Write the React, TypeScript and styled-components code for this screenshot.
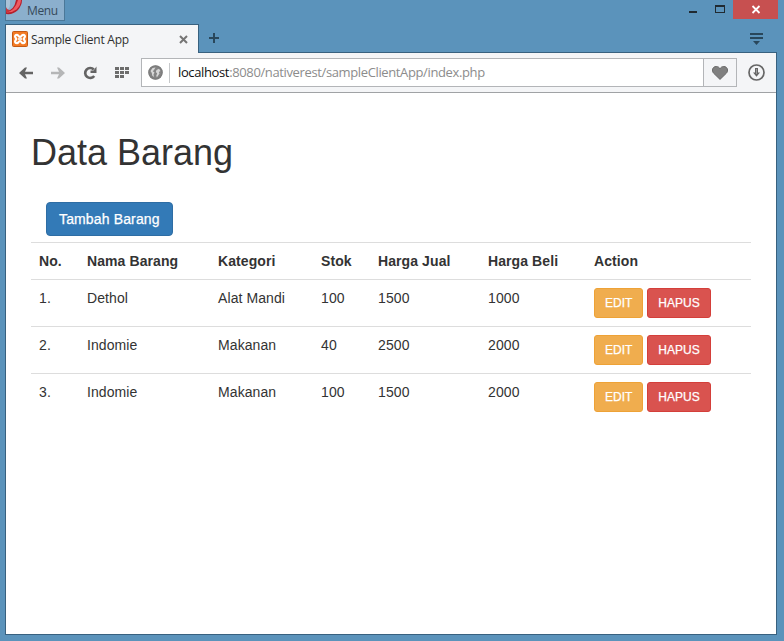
import React from "react";
import styled, { createGlobalStyle } from "styled-components";

const chrome = "#5b93bb";
const edge = "#38617f";
const panel = "#f4f5f7";

const GlobalStyle = createGlobalStyle`
  * { box-sizing: border-box; }
  html, body { margin: 0; padding: 0; background: ${chrome}; }
  body { overflow: hidden; }
  svg { display: block; flex: none; }
`;

const Window = styled.div`
  width: 784px;
  height: 641px;
  display: flex;
  flex-direction: column;
  padding: 0 7px 6px 5px;
  background: ${chrome};
  font-family: "Open Sans", "Noto Sans", sans-serif;
`;

const TitleBar = styled.header`
  height: 24px;
  flex: none;
  display: flex;
  align-items: flex-start;
  margin-right: -1px;
`;

const MenuButton = styled.button`
  width: 60px;
  height: 21px;
  padding: 0;
  display: flex;
  align-items: flex-start;
  border: 1px solid #4b7898;
  border-top: 0;
  background: #8bafcd;
  color: #35495a;
  font: 12px/20px "Open Sans", sans-serif;
  letter-spacing: -0.4px;
`;

const MenuLabel = styled.span`
  margin-left: 5px;
  padding-top: 1px;
`;

const WindowControls = styled.div`
  margin-left: auto;
  display: flex;
`;

const CloseButton = styled.div`
  width: 45px;
  height: 19px;
  background: #c75050;
`;

const TabRow = styled.nav`
  height: 29px;
  flex: none;
  display: flex;
`;

const Tab = styled.div`
  width: 194px;
  display: flex;
  align-items: center;
  border: 1px solid ${edge};
  border-bottom: 0;
  background: ${panel};
  padding: 0 10px 0 6px;
`;

const TabTitle = styled.span`
  margin-left: 3px;
  margin-right: auto;
  padding-top: 1px;
  color: #303030;
  font-size: 12px;
  line-height: 18px;
  letter-spacing: -0.24px;
  white-space: nowrap;
`;

const TabSpace = styled.div`
  flex: 1;
  display: flex;
  justify-content: space-between;
  border-bottom: 1px solid ${edge};
  padding: 9px 14px 0 10px;
`;

const Body = styled.div`
  flex: 1;
  display: flex;
  flex-direction: column;
  border: 1px solid ${edge};
  border-top: 0;
  background: #fff;
`;

const Toolbar = styled.div`
  height: 40px;
  flex: none;
  display: flex;
  align-items: center;
  background: ${panel};
  border-bottom: 1px solid #a0a2a5;
  padding: 0 11px 0 13px;
`;

const NavIcons = styled.div`
  width: 122px;
  display: flex;
  align-items: center;
  gap: 18px;
`;

const AddressBar = styled.div`
  width: 596px;
  height: 29px;
  margin-right: 11px;
  display: flex;
  align-items: center;
  border: 1px solid #b3b5b8;
  background: #fff;
  padding-left: 6px;
`;

const Separator = styled.div`
  width: 1px;
  height: 20px;
  margin: 0 8px 0 6px;
  background: #c6c8ca;
`;

const Url = styled.span`
  padding-bottom: 1px;
  color: #8c8c8c;
  font-size: 13px;
  line-height: 20px;
  letter-spacing: -0.37px;
  white-space: nowrap;
`;

const Host = styled.span`
  color: #111;
`;

const HeartBox = styled.div`
  width: 33px;
  height: 27px;
  margin-left: auto;
  display: flex;
  align-items: center;
  justify-content: center;
  border-left: 1px solid #b3b5b8;
  background: ${panel};
`;

const Page = styled.main`
  padding: 40px 25px 0;
  color: #333;
  font: 14px/20px "Liberation Sans", Arial, sans-serif;
`;

const Heading = styled.h1`
  margin: 0 0 29px;
  font-size: 36px;
  font-weight: 400;
  line-height: 40px;
`;

const Button = styled.button<{ $fill: string; $border: string; $small?: boolean }>`
  height: ${(p) => (p.$small ? 30 : 34)}px;
  padding: 0 ${(p) => (p.$small ? 10 : 12)}px;
  border: 1px solid ${(p) => p.$border};
  border-radius: ${(p) => (p.$small ? 3 : 4)}px;
  background: ${(p) => p.$fill};
  color: #fff;
  font-family: inherit;
  font-size: ${(p) => (p.$small ? 12 : 14)}px;
  letter-spacing: ${(p) => (p.$small ? 0 : 0.14)}px;
  line-height: 20px;
  white-space: nowrap;
  -webkit-text-stroke: 0.25px #fff;
`;

const AddRow = styled.div`
  display: flex;
  padding-left: 15px;
  margin-bottom: 6px;
`;

const Table = styled.table`
  width: 720px;
  table-layout: fixed;
  border-collapse: separate;
  border-spacing: 0;
  letter-spacing: 0.09px;
`;

const Column = styled.col<{ $width: number }>`
  width: ${(p) => p.$width}px;
`;

const HeadCell = styled.th`
  padding: 8px;
  border-top: 1px solid #ddd;
  text-align: left;
  white-space: nowrap;
`;

const Cell = styled.td`
  padding: 8px;
  border-top: 1px solid #ddd;
  vertical-align: top;
  white-space: nowrap;
`;

const Actions = styled.div`
  display: flex;
  gap: 4px;
`;

const columns: [string, number][] = [
  ["No.", 48],
  ["Nama Barang", 131],
  ["Kategori", 103],
  ["Stok", 57],
  ["Harga Jual", 110],
  ["Harga Beli", 106],
  ["Action", 165],
];

const items = [
  ["1.", "Dethol", "Alat Mandi", "100", "1500", "1000"],
  ["2.", "Indomie", "Makanan", "40", "2500", "2000"],
  ["3.", "Indomie", "Makanan", "100", "1500", "2000"],
];

const OperaLogo = () => (
  <svg width="16" height="15" viewBox="0 0 16 15">
    <path d="M10 0H16Q16 5 12 10Q7 15 0 14V11Q8 11 10 0Z" fill="#b51f2c" />
    <path d="M12 0H15Q15 5 10.5 9.500Q6 13 0 12.500Q9 11 12 0Z" fill="#ef5a62" />
    <path d="M0 0H4V4Q4 8 2 9.500Q0 9 0 8Z" fill="#a9c2d8" />
    <path d="M0 7Q1 10 4 10L2 12H0Z" fill="#c8343e" />
  </svg>
);

const XamppIcon = () => (
  <svg width="16" height="16" viewBox="0 0 16 16">
    <rect x=".5" y=".5" width="15" height="15" rx="1" fill="#f37a24" stroke="#c45a15" />
    <path
      d="M5 3.800C3.300 3.800 2.700 5 3.300 6.200L4.300 8L3.300 9.800C2.700 11 3.300 12.200 5 12.200C6.500 12.200 6.500 10 8 10C9.500 10 9.500 12.200 11 12.200C12.700 12.200 13.300 11 12.700 9.800L11.700 8L12.700 6.200C13.300 5 12.700 3.800 11 3.800C9.500 3.800 9.500 6 8 6C6.500 6 6.500 3.800 5 3.800Z"
      fill="#f37a24"
      stroke="#fff"
      strokeWidth="2.200"
    />
    <path d="M6 8H10" stroke="#fff" strokeWidth="1.600" />
  </svg>
);

const Arrow = ({ color, flip }: { color: string; flip?: boolean }) => (
  <svg width="14" height="14" viewBox="0 0 14 14">
    <path
      d="M0 7L6 1.500H8L6 5.800H14V8.200H6L8 12.500H6Z"
      fill={color}
      transform={flip ? "translate(14 0) scale(-1 1)" : undefined}
    />
  </svg>
);

const ReloadIcon = () => (
  <svg width="14" height="14" viewBox="0 0 14 14">
    <path d="M10.800 3.500A5 5 0 1 0 11.200 10" fill="none" stroke="#646464" strokeWidth="2.700" />
    <path d="M13.500 .5V7H7.500V4.500H10.500Z" fill="#646464" />
  </svg>
);

const GridIcon = () => (
  <svg width="15" height="12" viewBox="0 0 15 12" shapeRendering="crispEdges">
    {[0, 4, 8].map((y) =>
      [0, 5, 10]
        .filter((x) => y < 8 || x < 10)
        .map((x) => <rect key={`${x}-${y}`} x={x} y={y} width="4" height="3" fill="#6c6c6c" />),
    )}
  </svg>
);

const GlobeIcon = () => (
  <svg width="15" height="15" viewBox="0 0 15 15">
    <circle cx="7.500" cy="7.500" r="7" fill="#858585" />
    <path d="M2.500 6L4.500 3L7.500 2.500L6 5L4.800 6.200L6.500 7.500L5.500 9.500L6 12L4.200 10.500L3.800 8Z" fill="#d7d7d7" />
    <path d="M8.500 5L11 3.800L12.500 6L10.800 7L11.500 8.500L8.800 12.500L8.300 10.500L9.200 8.500L7.800 7Z" fill="#d7d7d7" />
    <circle cx="7.500" cy="7.500" r="6.500" fill="none" stroke="#7d7d7d" strokeWidth="1.500" />
  </svg>
);

const HeartIcon = () => (
  <svg width="16" height="14" viewBox="0 0 16 14">
    <path
      d="M8 13.400L1.500 7.100C-.4 4.900.3.500 4.200.5C6.100.5 7.500 1.500 8 2.900C8.500 1.500 9.900.5 11.800.5C15.700.5 16.400 4.900 14.500 7.100Z"
      fill="#808080"
      stroke="#696969"
    />
  </svg>
);

const DownloadIcon = () => (
  <svg width="17" height="17" viewBox="0 0 17 17">
    <circle cx="8.500" cy="8.500" r="7.500" fill="none" stroke="#666" strokeWidth="1.700" />
    <path d="M7 4H10V8.500H12L8.500 12.700L5 8.500H7Z" fill="#666" />
    <path d="M8.500 5V10" stroke="#999" />
  </svg>
);

export default function App() {
  return (
    <>
      <GlobalStyle />
      <Window>
        <TitleBar>
          <MenuButton>
            <OperaLogo />
            <MenuLabel>Menu</MenuLabel>
          </MenuButton>
          <WindowControls>
            <svg width="44" height="19" viewBox="0 0 44 19" shapeRendering="crispEdges">
              <path d="M0 11H8V13H0Z" fill="#202a31" />
              <path d="M26 5H36V13H26Z M27 7V12H35V7Z" fill="#202a31" fillRule="evenodd" />
            </svg>
            <CloseButton>
              <svg width="45" height="19" viewBox="0 0 45 19">
                <path d="M19.500 6L26.500 13M26.500 6L19.500 13" stroke="#fff" strokeWidth="1.800" />
              </svg>
            </CloseButton>
          </WindowControls>
        </TitleBar>
        <TabRow>
          <Tab>
            <XamppIcon />
            <TabTitle>Sample Client App</TabTitle>
            <svg width="9" height="9" viewBox="0 0 9 9">
              <path d="M1 1L8 8M8 1L1 8" stroke="#757575" strokeWidth="2" />
            </svg>
          </Tab>
          <TabSpace>
            <svg width="10" height="10" viewBox="0 0 10 10" shapeRendering="crispEdges">
              <path d="M4 0H6V4H10V6H6V10H4V6H0V4H4Z" fill="#29475b" />
            </svg>
            <svg width="13" height="12" viewBox="0 0 13 12">
              <path d="M0 0H13V2H0ZM0 4H13V6H0ZM3 8H10L6.500 12Z" fill="#29475b" />
            </svg>
          </TabSpace>
        </TabRow>
        <Body>
          <Toolbar>
            <NavIcons>
              <Arrow color="#646464" />
              <Arrow color="#b5b6b7" flip />
              <ReloadIcon />
              <GridIcon />
            </NavIcons>
            <AddressBar>
              <GlobeIcon />
              <Separator />
              <Url>
                <Host>localhost</Host>:8080/nativerest/sampleClientApp/index.php
              </Url>
              <HeartBox>
                <HeartIcon />
              </HeartBox>
            </AddressBar>
            <DownloadIcon />
          </Toolbar>
          <Page>
            <Heading>Data Barang</Heading>
            <AddRow>
              <Button $fill="#337ab7" $border="#2e6da4">
                Tambah Barang
              </Button>
            </AddRow>
            <Table>
              <colgroup>
                {columns.map(([name, width]) => (
                  <Column key={name} $width={width} />
                ))}
              </colgroup>
              <thead>
                <tr>
                  {columns.map(([name]) => (
                    <HeadCell key={name}>{name}</HeadCell>
                  ))}
                </tr>
              </thead>
              <tbody>
                {items.map((item) => (
                  <tr key={item[0]}>
                    {item.map((value, index) => (
                      <Cell key={index}>{value}</Cell>
                    ))}
                    <Cell>
                      <Actions>
                        <Button $small $fill="#f0ad4e" $border="#eea236">
                          EDIT
                        </Button>
                        <Button $small $fill="#d9534f" $border="#d43f3a">
                          HAPUS
                        </Button>
                      </Actions>
                    </Cell>
                  </tr>
                ))}
              </tbody>
            </Table>
          </Page>
        </Body>
      </Window>
    </>
  );
}
